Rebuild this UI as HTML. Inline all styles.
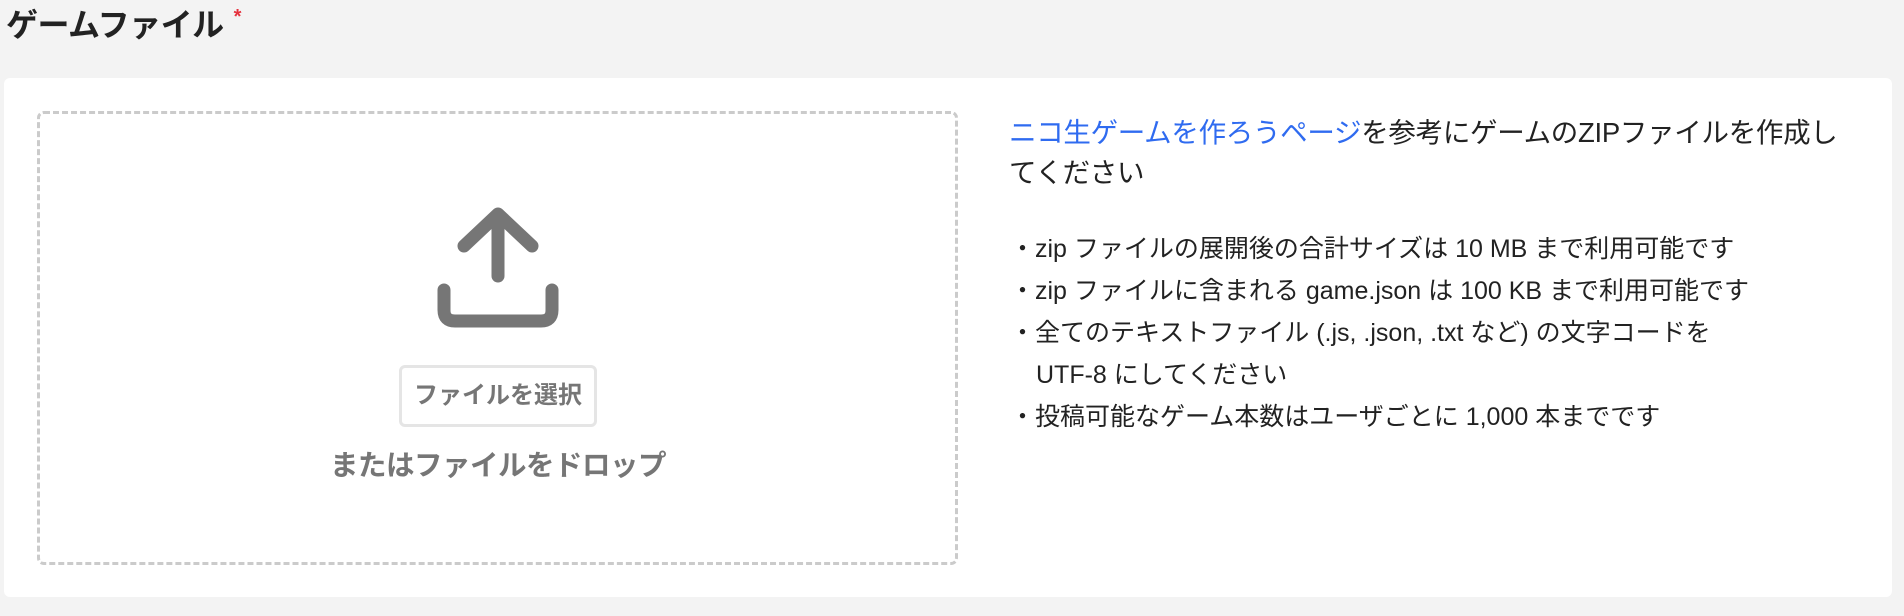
<!DOCTYPE html>
<html><head><meta charset="utf-8"><style>
body{margin:0;width:1904px;height:616px;background:#f3f3f3;font-family:"Liberation Sans","Noto Sans CJK JP",sans-serif;position:relative;overflow:hidden}
.title{position:absolute;left:6px;top:0px;font-size:32px;font-weight:bold;color:#222;letter-spacing:-0.5px}
.title span{color:#e5323e;font-size:20px;vertical-align:top;position:relative;top:6px;margin-left:10px}
.card{position:absolute;left:4px;top:78px;width:1888px;height:519px;background:#fff;border-radius:6px}
.drop{position:absolute;left:37px;top:111px;width:915px;height:448px;border:3px dashed #cbcbcb;border-radius:7px}
.btn{position:absolute;left:399px;top:365px;width:192px;height:56px;border:3px solid #e5e5e5;border-radius:6px;color:#767676;font-weight:bold;font-size:24px;text-align:center;line-height:56px}
.or{position:absolute;left:250px;width:496px;top:443px;text-align:center;color:#767676;font-weight:bold;font-size:28.5px;letter-spacing:-0.5px}
.txt{position:absolute;left:1009px;top:113px;font-size:25px;color:#222;line-height:42px;white-space:nowrap}
.p1{font-size:27.5px;line-height:40px;letter-spacing:-0.3px}
.txt a{color:#2f6bf0;text-decoration:none}
.li{padding-left:27px;text-indent:-26px}
</style></head><body>
<div class="title">ゲームファイル<span>*</span></div>
<div class="card"></div>
<div class="drop"></div>
<svg style="position:absolute;left:436px;top:206px" width="124" height="124" viewBox="0 0 124 124" fill="none" stroke="#767676" stroke-width="13" stroke-linecap="round" stroke-linejoin="round">
<path d="M62 70V8M28 40L62 8L96 40"/>
<path d="M8 84V104Q8 115 19 115H105Q116 115 116 104V84"/>
</svg>
<div class="btn">ファイルを選択</div>
<div class="or">またはファイルをドロップ</div>
<div class="txt">
<div class="p1"><a>ニコ生ゲームを作ろうページ</a>を参考にゲームのZIPファイルを作成し<br>てください</div>
<div style="height:35px"></div>
<div class="li">・zip ファイルの展開後の合計サイズは 10 MB まで利用可能です</div>
<div class="li">・zip ファイルに含まれる game.json は 100 KB まで利用可能です</div>
<div class="li">・全てのテキストファイル (.js, .json, .txt など) の文字コードを<br>UTF-8 にしてください</div>
<div class="li">・投稿可能なゲーム本数はユーザごとに 1,000 本までです</div>
</div>
</body></html>
